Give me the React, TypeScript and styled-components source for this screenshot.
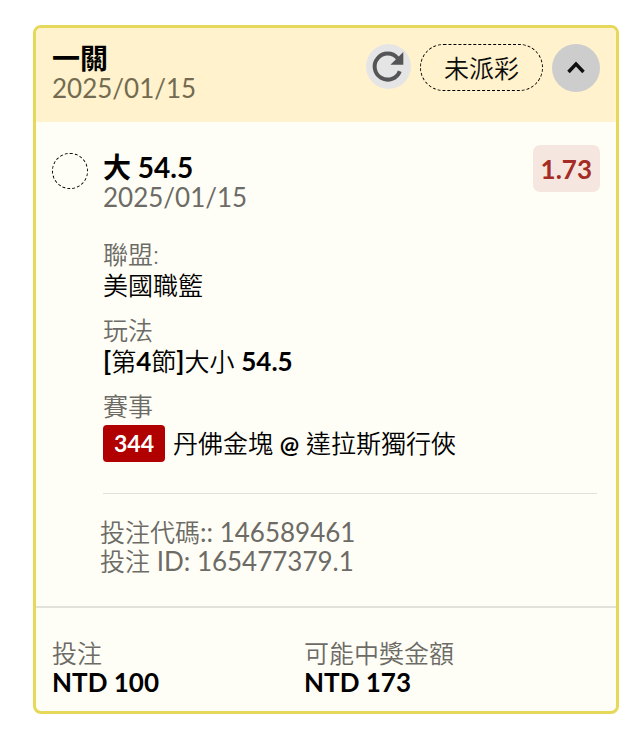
import React, { useState } from "react";
import styled, { createGlobalStyle } from "styled-components";

const GlobalStyle = createGlobalStyle`
  *, *::before, *::after { box-sizing: border-box; }
  body {
    margin: 0;
    background: #fff;
    color: #0c0c0a;
    font-family: Lato, "Noto Sans CJK TC", sans-serif;
    font-size: 26px;
    line-height: 30px;
  }
`;

const Page = styled.main`
  padding: 25px 17px 27px 33px;
`;

const Card = styled.article`
  border: 3px solid #e6d858;
  border-radius: 8px;
  background: #fffef6;
  overflow: hidden;
`;

const Header = styled.header`
  display: flex;
  justify-content: space-between;
  align-items: flex-start;
  padding: 16px 16px 19px;
  background: #fff2cc;
`;

const Title = styled.h2<{ $lineHeight?: number }>`
  margin: 0;
  font-size: 28px;
  font-weight: 700;
  line-height: ${(p) => p.$lineHeight ?? 30}px;
  color: #000;
`;

const Muted = styled.div<{ $color?: string }>`
  color: ${(p) => p.$color ?? "#6c6b66"};
`;

const Actions = styled.div`
  display: flex;
  gap: 9px;
`;

const RoundButton = styled.button<{ $size: number; $bg: string }>`
  display: grid;
  place-items: center;
  width: ${(p) => p.$size}px;
  height: ${(p) => p.$size}px;
  padding: 0;
  border: 0;
  border-radius: 50%;
  background: ${(p) => p.$bg};
  cursor: pointer;
`;

const Status = styled.span`
  display: flex;
  align-items: center;
  height: 47px;
  padding: 0 23px;
  border: 1px dashed #000;
  border-radius: 24px;
  font-size: 25px;
  font-weight: 350;
`;

const Selection = styled.section`
  display: grid;
  grid-template-columns: 36px minmax(0, 1fr) auto;
  column-gap: 15px;
  padding: 23px 16px 30px;
`;

const Marker = styled.span`
  width: 36px;
  height: 36px;
  margin-top: 8px;
  border: 1px dashed #000;
  border-radius: 50%;
`;

const Heading = styled.div`
  padding-top: 7px;
`;

const Odds = styled.span`
  align-self: start;
  padding: 9px 8px 8px;
  border-radius: 7px;
  background: #f6e6e0;
  color: #a42c24;
  font-weight: 700;
`;

const Details = styled.div`
  grid-column: 2 / -1;
  padding-top: 27px;
`;

const Fields = styled.dl`
  display: grid;
  gap: 14px;
  margin: 0;
  padding-bottom: 31px;
  margin-right: 3px;
  border-bottom: 1px solid #e2e1da;
`;

const Label = styled.dt`
  color: #6c6b66;
  font-size: 25px;
  font-weight: 350;
`;

const Value = styled.dd`
  margin: 0;
  font-size: 25px;
  font-weight: 350;
  line-height: 32px;
  color: #000;
`;

const Strong = styled.b`
  font-size: 26px;
  font-weight: 700;
`;

const At = styled.b`
  font-size: 23px;
  font-weight: 700;
`;

const Match = styled.div`
  display: flex;
  align-items: center;
  gap: 8px;
  padding-top: 4px;
`;

const Code = styled.span`
  padding: 0 11px;
  border-radius: 4px;
  background: #b00000;
  color: #fff;
  font-size: 23px;
  font-weight: 700;
  line-height: 37px;
`;

const Codes = styled.div`
  padding-top: 24px;
  margin-left: -3px;
  color: #6c6b66;
  line-height: 29px;
`;

const Han = styled.span`
  font-size: 25px;
  font-weight: 350;
`;

const Footer = styled.footer`
  display: grid;
  grid-template-columns: 252px minmax(0, 1fr);
  padding: 30px 16px 15px;
  border-top: 2px solid #e2e1da;
`;

const Total = styled.dl`
  margin: 0;
`;

const Amount = styled.dd`
  margin: 0;
  font-weight: 700;
  line-height: 28px;
  color: #000;
`;

const RefreshIcon = () => (
  <svg width="45" height="45" viewBox="0 0 45 45" aria-hidden="true">
    <path d="M31.6 14.2A13 13 0 1 0 33.8 27.2" fill="none" stroke="#555557" strokeWidth="4" />
    <path d="M37.3 8V20.8H24.4Z" fill="#555557" />
  </svg>
);

const ChevronIcon = ({ open }: { open: boolean }) => (
  <svg width="48" height="48" viewBox="0 0 48 48" aria-hidden="true">
    <path
      d={open ? "M16.5 28L24 20L31.5 28" : "M16.5 20L24 28L31.5 20"}
      fill="none"
      stroke="#101010"
      strokeWidth="3.4"
    />
  </svg>
);

export default function App() {
  const [open, setOpen] = useState(true);
  return (
    <>
      <GlobalStyle />
      <Page>
        <Card>
          <Header>
            <div>
              <Title $lineHeight={29}>一關</Title>
              <Muted $color="#736b51">2025/01/15</Muted>
            </div>
            <Actions>
              <RoundButton type="button" aria-label="重新整理" $size={45} $bg="#e5e5e6">
                <RefreshIcon />
              </RoundButton>
              <Status>未派彩</Status>
              <RoundButton
                type="button"
                aria-label="收合"
                aria-expanded={open}
                $size={48}
                $bg="#cdcdce"
                onClick={() => setOpen(!open)}
              >
                <ChevronIcon open={open} />
              </RoundButton>
            </Actions>
          </Header>
          {open && (
            <Selection>
              <Marker />
              <Heading>
                <Title>大 54.5</Title>
                <Muted>2025/01/15</Muted>
              </Heading>
              <Odds>1.73</Odds>
              <Details>
                <Fields>
                  <div>
                    <Label>聯盟:</Label>
                    <Value>美國職籃</Value>
                  </div>
                  <div>
                    <Label>玩法</Label>
                    <Value>
                      <Strong>[</Strong>第<Strong>4</Strong>節<Strong>]</Strong>大小 <Strong>54.5</Strong>
                    </Value>
                  </div>
                  <div>
                    <Label>賽事</Label>
                    <Value>
                      <Match>
                        <Code>344</Code>
                        <span>
                          丹佛金塊 <At>@</At> 達拉斯獨行俠
                        </span>
                      </Match>
                    </Value>
                  </div>
                </Fields>
                <Codes>
                  <div><Han>投注代碼</Han>:: 146589461</div>
                  <div><Han>投注</Han> ID: 165477379.1</div>
                </Codes>
              </Details>
            </Selection>
          )}
          <Footer>
            <Total>
              <Label>投注</Label>
              <Amount>NTD 100</Amount>
            </Total>
            <Total>
              <Label>可能中獎金額</Label>
              <Amount>NTD 173</Amount>
            </Total>
          </Footer>
        </Card>
      </Page>
    </>
  );
}
